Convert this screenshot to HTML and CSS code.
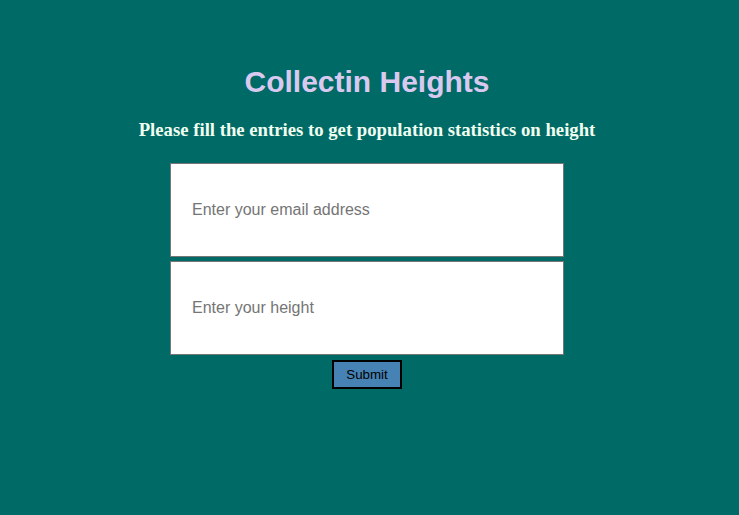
FILE: index.html
```html
<!DOCTYPE html>
<html>
<head>
<meta charset="utf-8">
<title>Collectin Heights</title>
<link rel="stylesheet" href="styles.css">
</head>
<body>
<main class="page">
  <h1 class="title">Collectin Heights</h1>
  <h3 class="subtitle">Please fill the entries to get population statistics on height</h3>
  <form class="form">
    <input class="field" type="email" placeholder="Enter your email address">
    <input class="field" type="text" placeholder="Enter your height">
    <button class="submit" type="button">Submit</button>
  </form>
</main>
</body>
</html>
```
FILE: styles.css
```css
html, body {
  margin: 0;
  padding: 0;
  background: #006a67;
  height: 100%;
}
.page {
  display: flex;
  flex-direction: column;
  align-items: center;
  padding: 64px 5px 0 0;
}
.title {
  margin: 0;
  font-family: "Liberation Sans", Arial, sans-serif;
  font-weight: bold;
  font-size: 30px;
  line-height: 35px;
  color: #d9c9ef;
}
.subtitle {
  margin: 20px 0 0;
  font-family: "Liberation Serif", "Times New Roman", serif;
  font-weight: bold;
  font-size: 18.72px;
  line-height: 22px;
  color: #f0fff0;
}
.form {
  display: flex;
  flex-direction: column;
  align-items: center;
  gap: 4px;
  margin-top: 22px;
}
.field {
  box-sizing: border-box;
  width: 394px;
  height: 94px;
  margin: 0;
  padding: 0 21px;
  border: 1px solid #767676;
  background: #fff;
  font-family: "Liberation Sans", Arial, sans-serif;
  font-size: 16px;
  color: #000;
  outline: none;
}
.field::placeholder {
  color: #757575;
}
.submit {
  box-sizing: border-box;
  width: 70px;
  height: 29px;
  margin-top: 1px;
  padding: 0;
  border: 2px solid #000;
  background: #4682b4;
  font-family: "Liberation Sans", Arial, sans-serif;
  font-size: 13.33px;
  color: #000;
}
```
